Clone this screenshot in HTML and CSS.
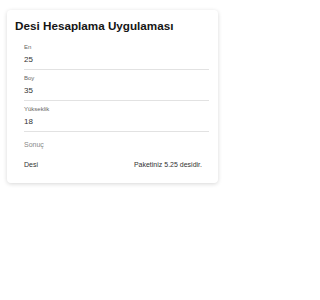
FILE: index.html
```html
<!DOCTYPE html>
<html lang="tr">
<head>
<meta charset="utf-8">
<title>Desi Hesaplama Uygulaması</title>
<link rel="stylesheet" href="styles.css">
</head>
<body>
<div class="card">
  <h1 class="title">Desi Hesaplama Uygulaması</h1>
  <div class="form">
    <div class="field">
      <div class="label">En</div>
      <div class="value">25</div>
    </div>
    <div class="field">
      <div class="label">Boy</div>
      <div class="value">35</div>
    </div>
    <div class="field">
      <div class="label">Yükseklik</div>
      <div class="value">18</div>
    </div>
    <div class="result-head">Sonuç</div>
    <div class="result-row">
      <span>Desi</span>
      <span>Paketiniz 5.25 desidir.</span>
    </div>
  </div>
</div>
</body>
</html>
```
FILE: styles.css
```css
html, body {
  margin: 0;
  padding: 0;
  background: #ffffff;
}
body {
  font-family: "Liberation Sans", Arial, sans-serif;
  width: 225px;
  height: 300px;
}
.card {
  margin: 10px 7px 0 7px;
  width: 211px;
  box-sizing: border-box;
  padding: 9px 9px 14px 8px;
  background: #fff;
  border-radius: 4px;
  box-shadow: 0 1px 4px rgba(0, 0, 0, 0.16);
}
.title {
  margin: 0 0 6px 0;
  font-size: 11.7px;
  line-height: 14px;
  font-weight: bold;
  color: #151515;
}
.form {
  margin-left: 9px;
}
.field {
  padding-top: 4.5px;
  border-bottom: 1px solid #e2e2e2;
}
.label {
  font-size: 6px;
  line-height: 7px;
  color: #666;
}
.value {
  margin-top: 4.5px;
  padding-bottom: 4px;
  font-size: 8px;
  line-height: 10px;
  color: #333;
}
.result-head {
  margin-top: 8px;
  font-size: 7px;
  line-height: 9px;
  color: #888;
}
.result-row {
  margin-top: 11px;
  padding-right: 7px;
  display: flex;
  justify-content: space-between;
  font-size: 7px;
  line-height: 9px;
  color: #333;
}
```
